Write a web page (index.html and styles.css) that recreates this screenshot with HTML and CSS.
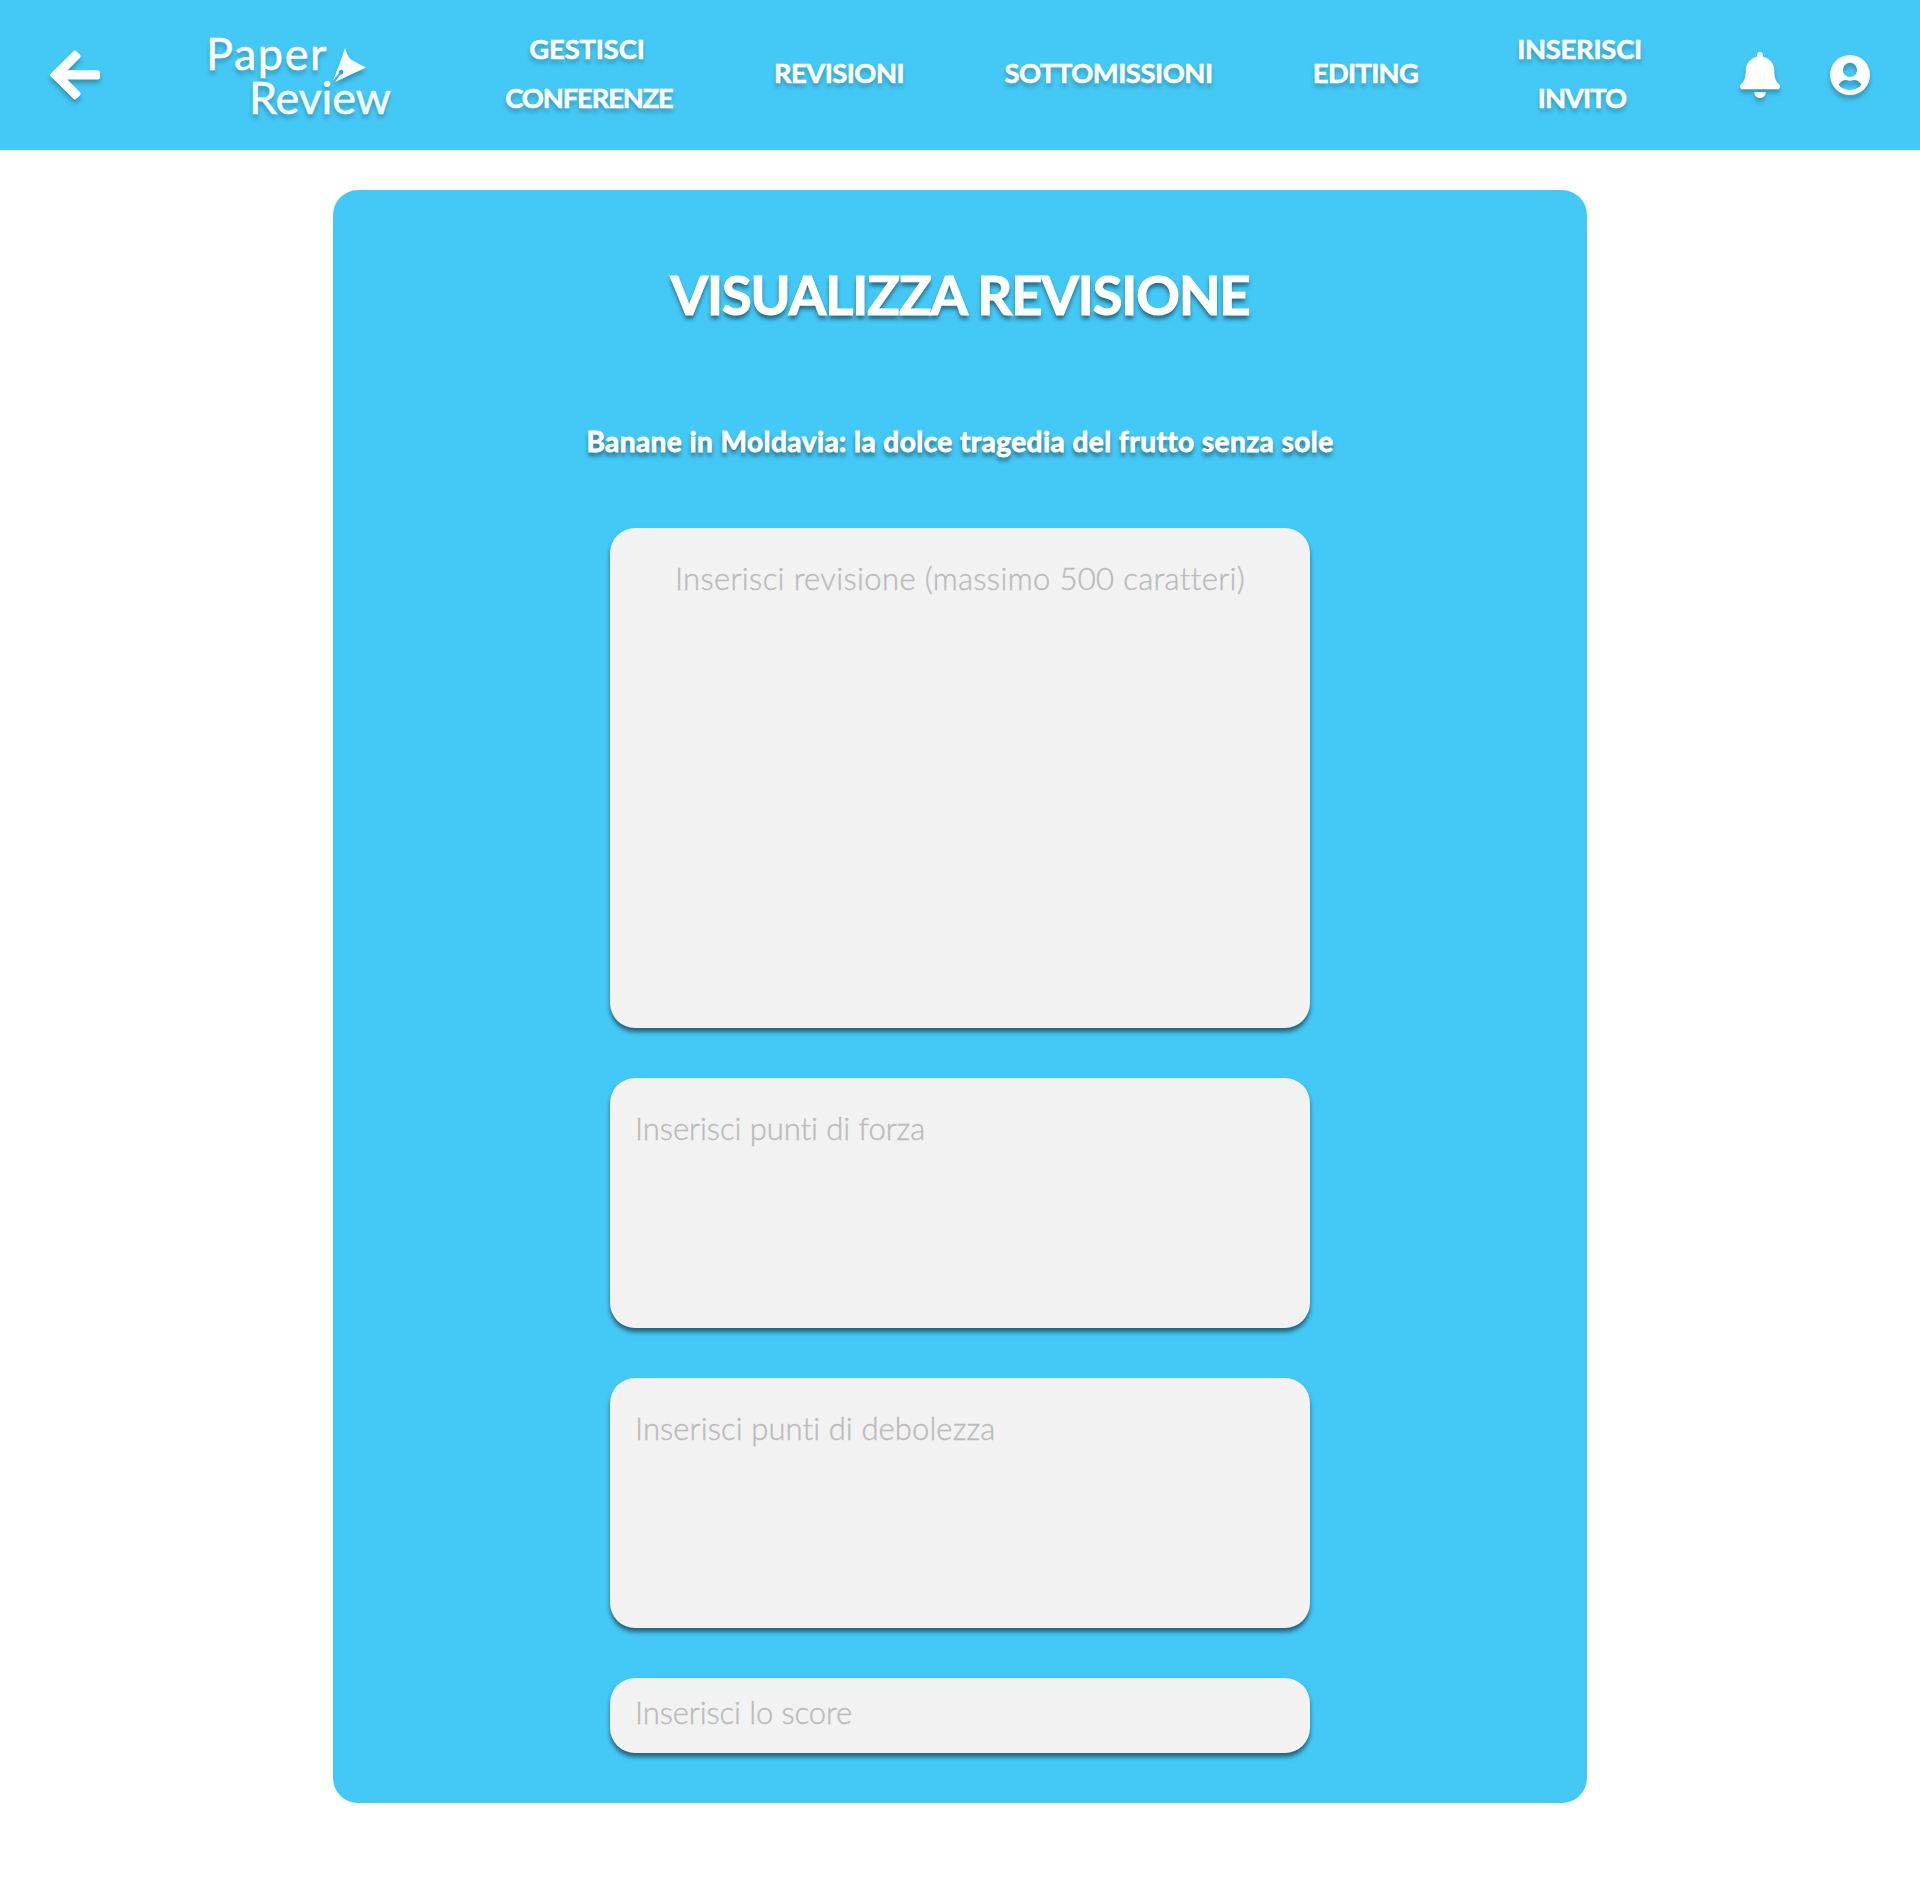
FILE: index.html
```html
<!DOCTYPE html>
<html lang="it">
<head>
<meta charset="utf-8">
<title>Paper Review</title>
<link rel="stylesheet" href="styles.css">
</head>
<body>
<header class="topbar">
  <a class="back" aria-label="Indietro">
    <svg class="icon" width="50" height="50" viewBox="0 0 50 50" fill="#fff">
      <rect x="12" y="20.2" width="38" height="9.4" rx="2.5"/>
      <g transform="translate(6.2 25)">
        <rect x="-4.75" y="-4.75" width="35.9" height="9.5" rx="2.5" transform="rotate(-45)"/>
        <rect x="-4.75" y="-4.75" width="35.9" height="9.5" rx="2.5" transform="rotate(45)"/>
      </g>
    </svg>
  </a>
  <a class="logo">
    <span class="logo-paper">Paper<svg class="nib icon" width="34" height="34" viewBox="0 0 34 34">
      <path d="M13 0C15 6.500 17 10.500 20.500 12.500L34 19.500L3 34L8.500 26.400A2.300 2.300 0 1 0 7 25.200L1 32.500Q7.500 17 13 0Z" fill="#fafdff"/>
    </svg></span>
    <span class="logo-review">Review</span>
  </a>
  <nav class="menu">
    <a class="item conferenze"><span class="w-gestisci">GESTISCI</span><span class="w-conferenze">CONFERENZE</span></a>
    <a class="item revisioni">REVISIONI</a>
    <a class="item sottomissioni">SOTTOMISSIONI</a>
    <a class="item editing">EDITING</a>
    <a class="item invito"><span class="w-inserisci">INSERISCI</span><span class="w-invito">INVITO</span></a>
  </nav>
  <div class="actions">
    <svg class="icon" width="40" height="46" viewBox="0 0 448 512" preserveAspectRatio="none" fill="#fff">
      <path d="M224 512c35.32 0 63.97-28.65 63.97-64H160.03c0 35.35 28.65 64 63.97 64zm215.39-149.71c-19.32-20.76-55.47-51.99-55.47-154.29 0-77.7-54.48-139.9-127.94-155.16V32c0-17.67-14.32-32-31.98-32s-31.98 14.33-31.98 32v20.84C118.56 68.1 64.08 130.3 64.08 208c0 102.3-36.15 133.53-55.47 154.29-6 6.45-8.66 14.16-8.61 21.71.11 16.4 12.98 32 32.1 32h383.8c19.12 0 32-15.6 32.1-32 .05-7.55-2.61-15.27-8.61-21.71z"/>
    </svg>
    <svg class="icon" width="40" height="40" viewBox="0 0 40 40" fill="#fff" fill-rule="evenodd">
      <path d="M20 0A20 20 0 1 1 20 40A20 20 0 1 1 20 0ZM20 7.800A7.100 7.100 0 1 0 20 22A7.100 7.100 0 1 0 20 7.800ZM8.600 29.800C10.500 26.800 13 25 15.700 25C17.300 25 18.200 25.700 20 25.700C21.800 25.700 22.700 25 24.300 25C27 25 29.500 26.800 31.400 29.800C29.200 33.100 25 35 20 35C15 35 10.800 33.100 8.600 29.800Z"/>
    </svg>
  </div>
</header>
<main class="panel">
  <h1 class="title">VISUALIZZA REVISIONE</h1>
  <h2 class="paper-title">Banane in Moldavia: la dolce tragedia del frutto senza sole</h2>
  <div class="fields">
    <div class="field review">Inserisci revisione (massimo 500 caratteri)</div>
    <div class="field strengths">Inserisci punti di forza</div>
    <div class="field weaknesses">Inserisci punti di debolezza</div>
    <div class="field score">Inserisci lo score</div>
  </div>
</main>
</body>
</html>
```
FILE: styles.css
```css
* { box-sizing: border-box; }
body {
  margin: 0;
  min-height: 1878px;
  background: #fff;
  font-family: Lato, "Open Sans", sans-serif;
  color: #fff;
}
.icon { display: block; flex: none; filter: drop-shadow(0 4px 2px rgba(0, 0, 0, .25)); }

.topbar {
  display: flex;
  align-items: center;
  height: 150px;
  padding: 0 50px;
  background: #44c8f5;
}
.back { margin-right: 106px; }
.logo {
  display: flex;
  flex-direction: column;
  flex: none;
  width: 199px;
  margin-right: 100px;
  padding-bottom: 1px;
  font-size: 45px;
  line-height: 44px;
  white-space: nowrap;
  -webkit-text-stroke: .5px #fff;
  text-shadow: 0 4px 4px rgba(0, 0, 0, .25);
}
.logo-paper { display: flex; height: 44px; letter-spacing: 1.6px; }
.nib { margin: 17px 0 0 4px; }
.logo-review { padding-left: 43px; color: #f2fbff; letter-spacing: -.2px; }

.menu {
  display: flex;
  align-items: center;
  gap: 100px;
  padding-bottom: 5px;
  font-size: 27.3px;
  font-weight: 700;
  line-height: 49px;
  white-space: nowrap;
  -webkit-text-stroke: .6px #fff;
  text-shadow: 0 4px 4px rgba(0, 0, 0, .25);
}
.item { display: flex; flex-direction: column; align-items: center; flex: none; }
.conferenze { width: 169px; }
.revisioni { width: 130px; letter-spacing: -.5px; }
.sottomissioni { width: 209px; letter-spacing: -.42px; }
.editing { width: 105px; letter-spacing: -.65px; }
.invito { width: 129px; }
.w-gestisci { padding-right: 5px; letter-spacing: -.1px; }
.w-conferenze { padding-right: 1px; letter-spacing: -1.1px; }
.w-inserisci { padding-right: 6px; letter-spacing: -.2px; }
.w-invito { padding-right: 1px; letter-spacing: -.9px; }
.actions { display: flex; align-items: center; gap: 50px; margin-left: auto; }

.panel {
  display: flex;
  flex-direction: column;
  align-items: center;
  width: 1254px;
  height: 1613px;
  margin: 40px auto 0;
  padding-top: 65px;
  border-radius: 25px;
  background: #44c8f5;
  white-space: nowrap;
  text-shadow: 0 4px 4px rgba(0, 0, 0, .5);
}
.title {
  margin: 0;
  font-size: 54px;
  line-height: 80px;
  letter-spacing: -1px;
  -webkit-text-stroke: 1.2px #fff;
}
.paper-title {
  margin: 81px 0 62px;
  font-size: 28px;
  line-height: 50px;
  letter-spacing: .45px;
  -webkit-text-stroke: .8px #fff;
}
.fields { display: flex; flex-direction: column; gap: 50px; width: 700px; }
.field {
  height: 250px;
  padding: 25px;
  border-radius: 25px;
  background: #f2f2f2;
  box-shadow: 0 4px 4px rgba(0, 0, 0, .5);
  color: #bbb;
  font-size: 31px;
  font-weight: 300;
  line-height: 50px;
  text-shadow: none;
  -webkit-text-stroke: .4px #bbb;
}
.review { height: 500px; letter-spacing: .36px; text-align: center; }
.strengths { letter-spacing: -.05px; }
.weaknesses { letter-spacing: .1px; }
.score { height: 75px; padding-top: 9px; letter-spacing: -.1px; }
```
